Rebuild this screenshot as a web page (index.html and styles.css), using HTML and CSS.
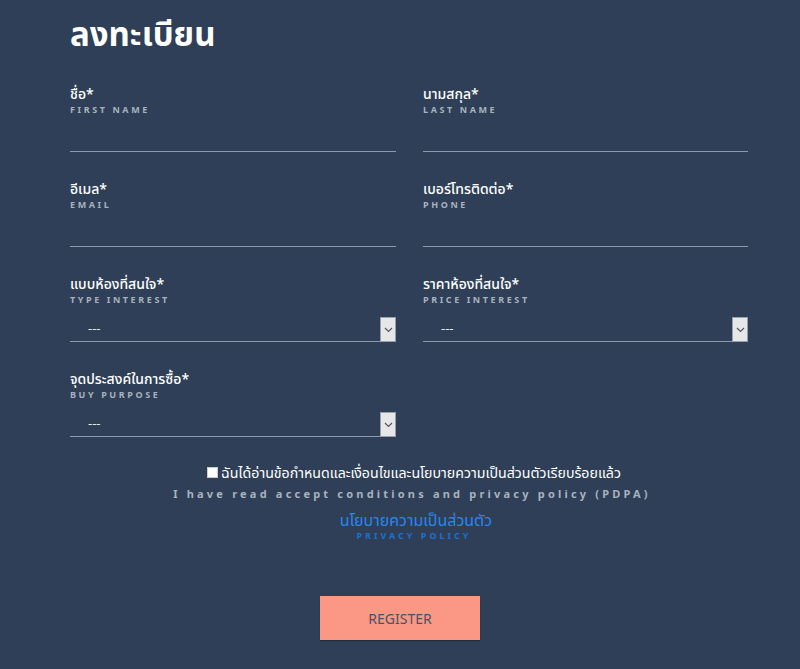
FILE: index.html
```html
<!DOCTYPE html>
<html lang="th">
<head>
<meta charset="utf-8">
<title>ลงทะเบียน</title>
<link rel="stylesheet" href="styles.css">
</head>
<body>
<main class="page">
  <h1 class="title">ลงทะเบียน</h1>
  <form class="form">
    <div class="grid">
      <div class="field">
        <div class="label">ชื่อ*</div>
        <div class="sub">FIRST NAME</div>
        <div class="input"></div>
      </div>
      <div class="field">
        <div class="label">นามสกุล*</div>
        <div class="sub">LAST NAME</div>
        <div class="input"></div>
      </div>
      <div class="field">
        <div class="label">อีเมล*</div>
        <div class="sub">EMAIL</div>
        <div class="input"></div>
      </div>
      <div class="field">
        <div class="label">เบอร์โทรติดต่อ*</div>
        <div class="sub">PHONE</div>
        <div class="input"></div>
      </div>
      <div class="field">
        <div class="label">แบบห้องที่สนใจ*</div>
        <div class="sub">TYPE INTEREST</div>
        <div class="select"><span class="value">---</span><span class="arrow"><svg width="9" height="6" viewBox="0 0 9 6"><path d="M1 1 L4.5 4.5 L8 1" fill="none" stroke="#555" stroke-width="1.2"/></svg></span></div>
      </div>
      <div class="field">
        <div class="label">ราคาห้องที่สนใจ*</div>
        <div class="sub">PRICE INTEREST</div>
        <div class="select"><span class="value">---</span><span class="arrow"><svg width="9" height="6" viewBox="0 0 9 6"><path d="M1 1 L4.5 4.5 L8 1" fill="none" stroke="#555" stroke-width="1.2"/></svg></span></div>
      </div>
      <div class="field">
        <div class="label">จุดประสงค์ในการซื้อ*</div>
        <div class="sub">BUY PURPOSE</div>
        <div class="select"><span class="value">---</span><span class="arrow"><svg width="9" height="6" viewBox="0 0 9 6"><path d="M1 1 L4.5 4.5 L8 1" fill="none" stroke="#555" stroke-width="1.2"/></svg></span></div>
      </div>
    </div>
    <div class="agree">
      <div class="agree-th"><span class="box"></span>ฉันได้อ่านข้อกำหนดและเงื่อนไขและนโยบายความเป็นส่วนตัวเรียบร้อยแล้ว</div>
      <div class="agree-en">I have read accept conditions and privacy policy (PDPA)</div>
      <div class="policy-th">นโยบายความเป็นส่วนตัว</div>
      <div class="policy-en">PRIVACY POLICY</div>
    </div>
  </form>
  <div class="actions"><button class="btn" type="button">REGISTER</button></div>
</main>
</body>
</html>
```
FILE: styles.css
```css
html, body {
  margin: 0;
  padding: 0;
}
body {
  background: #2e3f57;
  font-family: "Noto Sans", "Noto Sans Thai", "Noto Sans Thai UI", sans-serif;
  color: #ffffff;
  width: 800px;
  height: 669px;
  overflow: hidden;
}
.page {
  padding-top: 13px;
}
.title {
  margin: 0 0 0 70px;
  font-size: 33px;
  line-height: 42px;
  font-weight: 700;
  color: #ffffff;
}
.form {
  margin-left: 70px;
  width: 678px;
  margin-top: 30px;
}
.grid {
  display: grid;
  grid-template-columns: 326px 325px;
  column-gap: 27px;
}
.field {
  margin-bottom: 28px;
}
.label {
  font-size: 14px;
  line-height: 18px;
  font-weight: 500;
  color: #ffffff;
}
.sub {
  margin-top: 1px;
  font-size: 9px;
  line-height: 11px;
  font-weight: 700;
  letter-spacing: 2.6px;
  color: #a9b2be;
}
.input {
  height: 36px;
  border-bottom: 1px solid #8f99a7;
}
.select {
  position: relative;
  height: 36px;
  border-bottom: 1px solid #8f99a7;
  display: flex;
  align-items: flex-end;
}
.select .value {
  padding-left: 18px;
  padding-bottom: 5px;
  font-size: 13px;
  line-height: 16px;
  color: #e8ebef;
}
.select .arrow {
  position: absolute;
  right: 0;
  bottom: -1px;
  width: 14px;
  height: 23px;
  background: #e7e7e7;
  border: 1px solid #9aa0a8;
  display: flex;
  align-items: center;
  justify-content: center;
}
.agree {
  margin-top: -2px;
  text-align: center;
  padding-left: 10px;
}
.agree-th {
  font-size: 14.2px;
  line-height: 19px;
  color: #ffffff;
  display: flex;
  align-items: center;
  justify-content: center;
  gap: 3px;
}
.box {
  display: inline-block;
  width: 11px;
  height: 11px;
  background: #ffffff;
  border: 1px solid #cccccc;
  box-sizing: border-box;
}
.agree-en {
  margin-top: 5px;
  font-size: 11px;
  line-height: 14px;
  font-weight: 700;
  letter-spacing: 3.2px;
  color: #a9b2be;
  padding-right: 4px;
}
.policy-th {
  margin-top: 9px;
  font-size: 16px;
  line-height: 20px;
  color: #2a86f0;
  padding-left: 4px;
}
.policy-en {
  font-size: 9px;
  line-height: 11px;
  font-weight: 700;
  letter-spacing: 3px;
  color: #1f6fd0;
}
.actions {
  display: flex;
  justify-content: center;
  margin-top: 55px;
}
.btn {
  width: 160px;
  height: 44px;
  border: none;
  background: #fa9785;
  color: #4a5263;
  font-family: "Noto Sans", "Open Sans", sans-serif;
  font-size: 14px;
  box-shadow: 0 1px 1px rgba(0,0,0,0.25);
}
```
